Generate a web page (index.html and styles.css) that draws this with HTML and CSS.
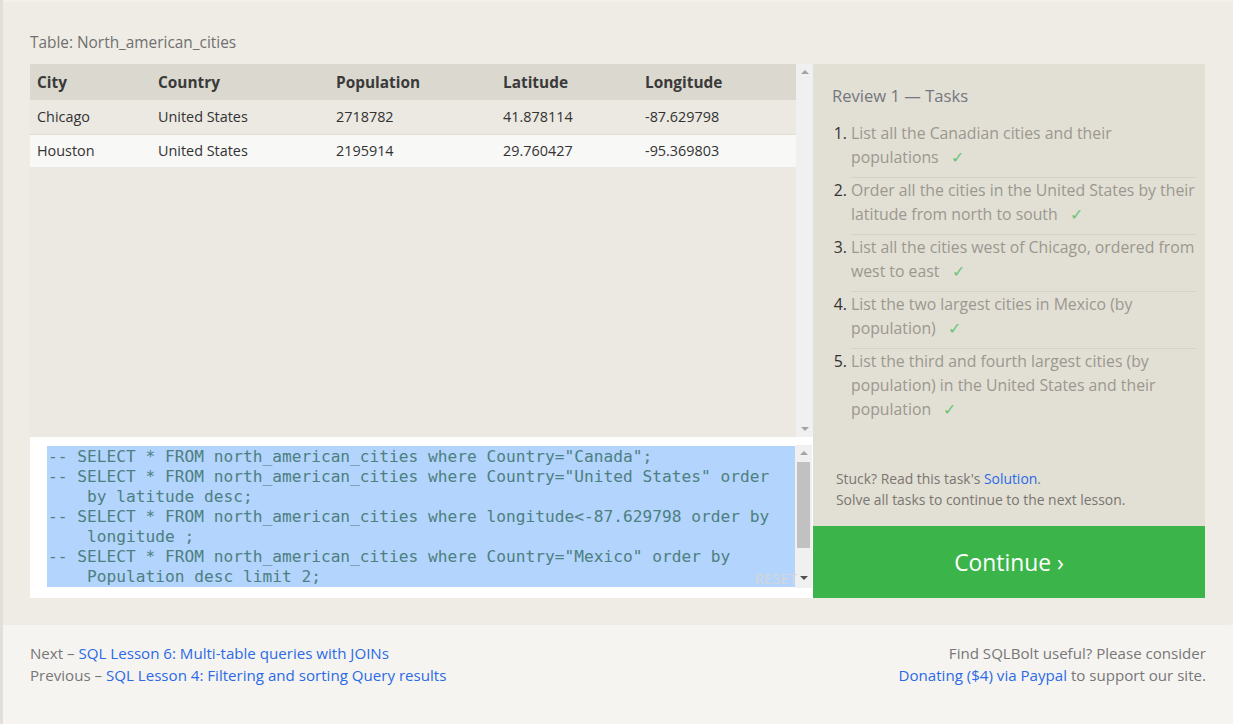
FILE: index.html
```html
<!DOCTYPE html>
<html>
<head>
<meta charset="utf-8">
<link rel="stylesheet" href="styles.css">
</head>
<body>
<div class="page">
  <main class="main">
    <div class="table-caption">Table: North_american_cities</div>
    <div class="exercise">
      <div class="left-col">
        <div class="table-view">
          <div class="table-scroll">
            <table class="results">
              <thead>
                <tr><th class="c1">City</th><th class="c2">Country</th><th class="c3">Population</th><th class="c4">Latitude</th><th>Longitude</th></tr>
              </thead>
              <tbody>
                <tr class="odd"><td>Chicago</td><td>United States</td><td>2718782</td><td>41.878114</td><td>-87.629798</td></tr>
                <tr class="even"><td>Houston</td><td>United States</td><td>2195914</td><td>29.760427</td><td>-95.369803</td></tr>
              </tbody>
            </table>
          </div>
          <div class="scrollbar">
            <span class="arrow up"></span>
            <span class="arrow down"></span>
          </div>
        </div>
        <div class="editor">
          <div class="code">
            <div class="line">-- SELECT * FROM north_american_cities where Country="Canada";</div>
            <div class="line">-- SELECT * FROM north_american_cities where Country="United States" order</div>
            <div class="line wrap">by latitude desc;</div>
            <div class="line">-- SELECT * FROM north_american_cities where longitude&lt;-87.629798 order by</div>
            <div class="line wrap">longitude ;</div>
            <div class="line">-- SELECT * FROM north_american_cities where Country="Mexico" order by</div>
            <div class="line wrap">Population desc limit 2;</div>
          </div>
          <div class="scrollbar editor-scroll">
            <span class="arrow up"></span>
            <span class="thumb"></span>
            <span class="arrow down"></span>
          </div>
          <span class="reset">RESET</span>
        </div>
      </div>
      <div class="right-col">
        <div class="tasks">
          <h3 class="tasks-title">Review 1 — Tasks</h3>
          <ol class="task-list">
            <li>List all the Canadian cities and their populations <span class="check">✓</span></li>
            <li>Order all the cities in the United States by their latitude from north to south <span class="check">✓</span></li>
            <li>List all the cities west of Chicago, ordered from west to east <span class="check">✓</span></li>
            <li>List the two largest cities in Mexico (by population) <span class="check">✓</span></li>
            <li>List the third and fourth largest cities (by population) in the United States and their population <span class="check">✓</span></li>
          </ol>
          <div class="hint">
            <div>Stuck? Read this task's <a href="#">Solution</a>.</div>
            <div>Solve all tasks to continue to the next lesson.</div>
          </div>
        </div>
        <a class="continue" href="#">Continue ›</a>
      </div>
    </div>
  </main>
  <footer class="footer">
    <div class="nav">
      <div>Next – <a href="#">SQL Lesson 6: Multi-table queries with JOINs</a></div>
      <div>Previous – <a href="#">SQL Lesson 4: Filtering and sorting Query results</a></div>
    </div>
    <div class="donate">
      <div>Find SQLBolt useful? Please consider</div>
      <div><a href="#">Donating ($4) via Paypal</a> to support our site.</div>
    </div>
  </footer>
</div>
</body>
</html>
```

FILE: styles.css
```css
* { box-sizing: border-box; }
html, body { margin: 0; padding: 0; }
body {
  font-family: "Open Sans", "Noto Sans", sans-serif;
  background: #f6f4f1;
  width: 1233px;
  height: 724px;
  overflow: hidden;
}
a { color: #2a6ae6; text-decoration: none; }
.page {
  border-left: 3px solid #e2dfda;
  min-height: 724px;
  background: #f6f4f1;
}
.main {
  background: #efece5;
  border-top: 2px solid #f3f1ec;
  padding: 29px 28px 27px 27px;
  border-bottom-right-radius: 4px;
}
.table-caption {
  font-size: 15.4px;
  color: #707070;
  line-height: 24px;
  height: 33px;
}
.exercise {
  display: flex;
  height: 534px;
}
.left-col {
  width: 783px;
  display: flex;
  flex-direction: column;
}
.table-view {
  height: 373px;
  background: #ebe9e2;
  display: flex;
}
.table-scroll { flex: 1; }
.results {
  width: 100%;
  border-collapse: collapse;
  font-size: 14.4px;
  color: #333;
}
.results th {
  text-align: left;
  font-weight: 700;
  background: #dbd9cf;
  height: 36px;
  padding: 1px 7px 0;
  font-size: 15.4px;
  color: #3a3a3a;
}
.results td {
  height: 33px;
  padding: 0 7px;
}
.results .c1 { width: 121px; }
.results .c2 { width: 178px; }
.results .c3 { width: 167px; }
.results .c4 { width: 142px; }
.results tr.odd td { background: #ebe9e2; border-bottom: 1px solid #dfddd6; height: 34px; }
.results tr.even td { background: #f8f8f7; }
.scrollbar {
  width: 17px;
  background: #f0f0f0;
  position: relative;
}
.arrow {
  position: absolute;
  left: 5px;
  width: 0;
  height: 0;
  border-left: 4px solid transparent;
  border-right: 4px solid transparent;
}
.arrow.up { top: 6px; border-bottom: 4px solid #a3a3a3; }
.arrow.down { bottom: 6px; border-top: 4px solid #a3a3a3; }
.editor {
  height: 161px;
  background: #fff;
  position: relative;
  display: flex;
  padding: 9px 1px 11px 17px;
}
.code {
  flex: 1;
  background: #b3d4fc;
  font-family: "DejaVu Sans Mono", monospace;
  font-size: 16.2px;
  line-height: 20px;
  color: #4d8080;
  overflow: hidden;
  height: 141px;
  padding-left: 1px;
  padding-top: 1px;
}
.line { white-space: pre; height: 20px; }
.line.wrap { padding-left: 39px; }
.editor-scroll {
  margin-top: -1px;
  height: 143px;
}
.editor-scroll .up { top: 6px; border-bottom-color: #a3a3a3; }
.editor-scroll .down { bottom: 8px; border-top-color: #505050; }
.thumb {
  position: absolute;
  left: 2px;
  top: 17px;
  width: 13px;
  height: 86px;
  background: #c1c1c1;
}
.reset {
  position: absolute;
  right: 16px;
  bottom: 10px;
  font-size: 15px;
  color: #d6d6d6;
  line-height: 20px;
  font-family: "Open Sans", sans-serif;
}
.right-col {
  width: 392px;
  display: flex;
  flex-direction: column;
}
.tasks {
  flex: 1;
  background: #e2dfd5;
  padding: 19px 9px 0 19px;
}
.tasks-title {
  margin: 0;
  font-weight: 400;
  font-size: 16.6px;
  color: #747780;
  line-height: 26px;
}
.task-list {
  margin: 12px 0 0 0;
  padding: 0 0 0 19px;
  font-size: 15.8px;
  line-height: 24px;
  color: #9b988f;
}
.task-list li {
  border-bottom: 1px solid #d5d2c8;
  padding-bottom: 8px;
}
.task-list li:last-child { border-bottom: none; }
.task-list li::marker { color: #333; }
.check { color: #6cc478; margin-left: 8px; }
.hint {
  margin-top: 39px;
  padding-left: 4px;
  font-size: 13.9px;
  line-height: 21px;
  color: #7a7670;
}
.continue {
  height: 72px;
  background: #3bb54a;
  color: #fff;
  font-size: 22.8px;
  display: flex;
  align-items: center;
  justify-content: center;
}
.footer {
  display: flex;
  justify-content: space-between;
  padding: 17px 27px 0 27px;
  font-size: 15.1px;
  line-height: 22px;
  color: #777;
}
.donate { text-align: right; }
```
